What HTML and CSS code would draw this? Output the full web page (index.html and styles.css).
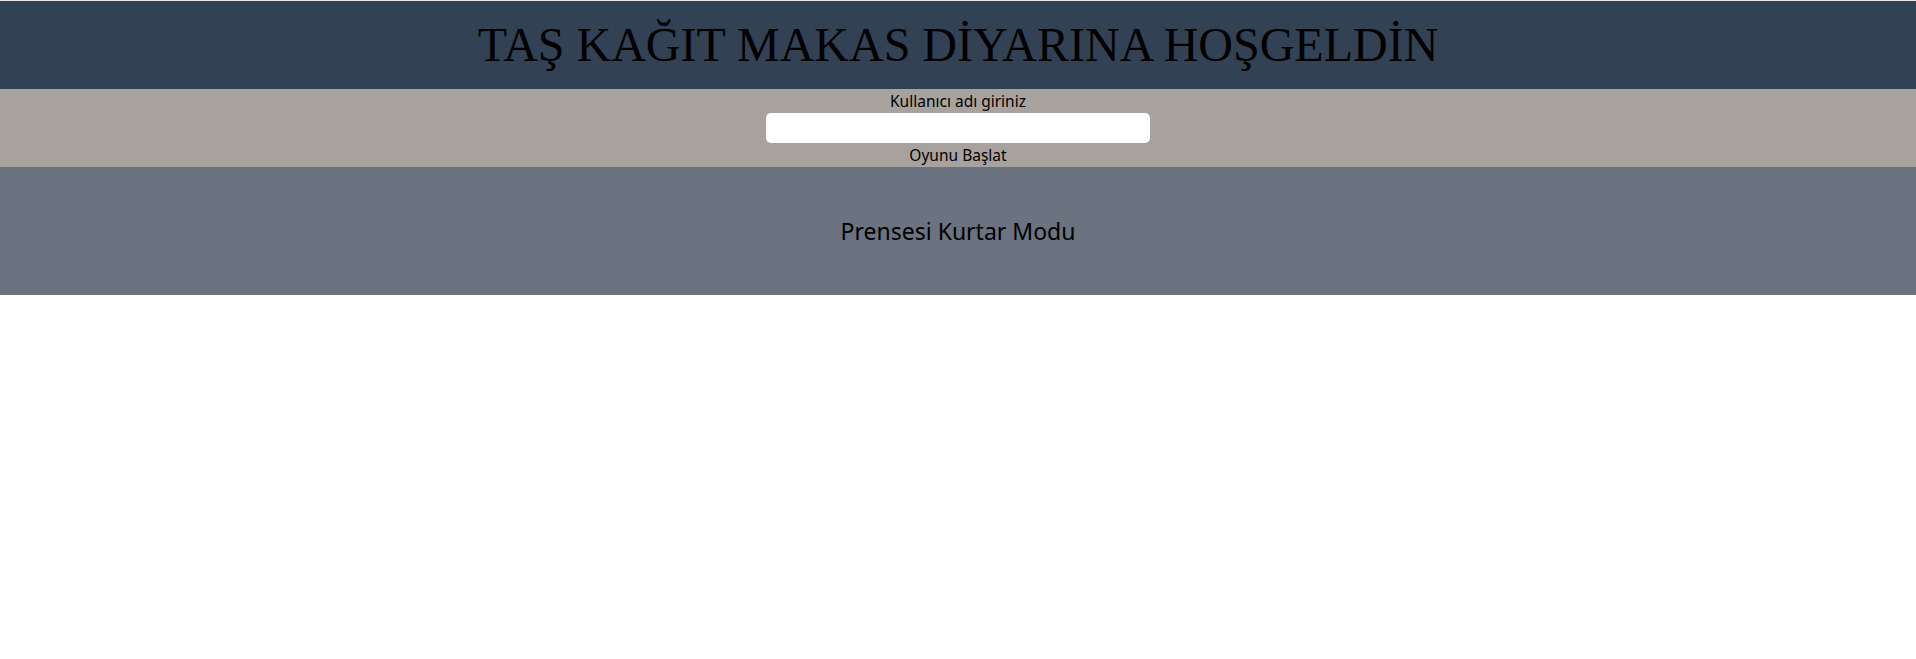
FILE: index.html
```html
<!DOCTYPE html>
<html lang="tr">
<head>
<meta charset="utf-8">
<title>Taş Kağıt Makas</title>
<link rel="stylesheet" href="styles.css">
</head>
<body>
<header class="site-header">
  <h1 class="title">TAŞ KAĞIT MAKAS DİYARINA HOŞGELDİN</h1>
</header>
<section class="login">
  <label class="login-label" for="username">Kullanıcı adı giriniz</label>
  <input class="login-input" id="username" type="text">
  <button class="login-button" type="button">Oyunu Başlat</button>
</section>
<section class="mode">
  <p class="mode-text">Prensesi Kurtar Modu</p>
</section>
</body>
</html>
```

FILE: styles.css
```css
html, body {
  margin: 0;
  padding: 0;
  background: #ffffff;
}

body {
  font-family: "Noto Sans", "Open Sans", sans-serif;
  color: #000000;
}

.site-header {
  background: #334155;
  border-top: 1px solid #e5e7eb;
  padding: 17px 0 18px;
  display: flex;
  justify-content: center;
}

.title {
  margin: 0;
  font-family: "Liberation Serif", "Times New Roman", serif;
  font-weight: normal;
  font-size: 48px;
  line-height: 53px;
  color: #000000;
}

.login {
  background: #a8a29e;
  display: flex;
  flex-direction: column;
  align-items: center;
  height: 78px;
}

.login-label {
  font-size: 15.5px;
  line-height: 22px;
  height: 22px;
  padding-top: 1px;
  box-sizing: content-box;
}

.login-input {
  margin-top: 1px;
  width: 384px;
  height: 30px;
  box-sizing: border-box;
  border: none;
  border-radius: 5px;
  background: #ffffff;
  padding: 0 8px;
  font: inherit;
}

.login-button {
  background: none;
  border: none;
  padding: 0;
  font-family: inherit;
  font-size: 15.5px;
  line-height: 24px;
  height: 24px;
  color: #000000;
  cursor: pointer;
}

.mode {
  background: #6b7280;
  height: 128px;
  display: flex;
  align-items: center;
  justify-content: center;
}

.mode-text {
  margin: 0;
  font-size: 23px;
  line-height: 30px;
}
```
